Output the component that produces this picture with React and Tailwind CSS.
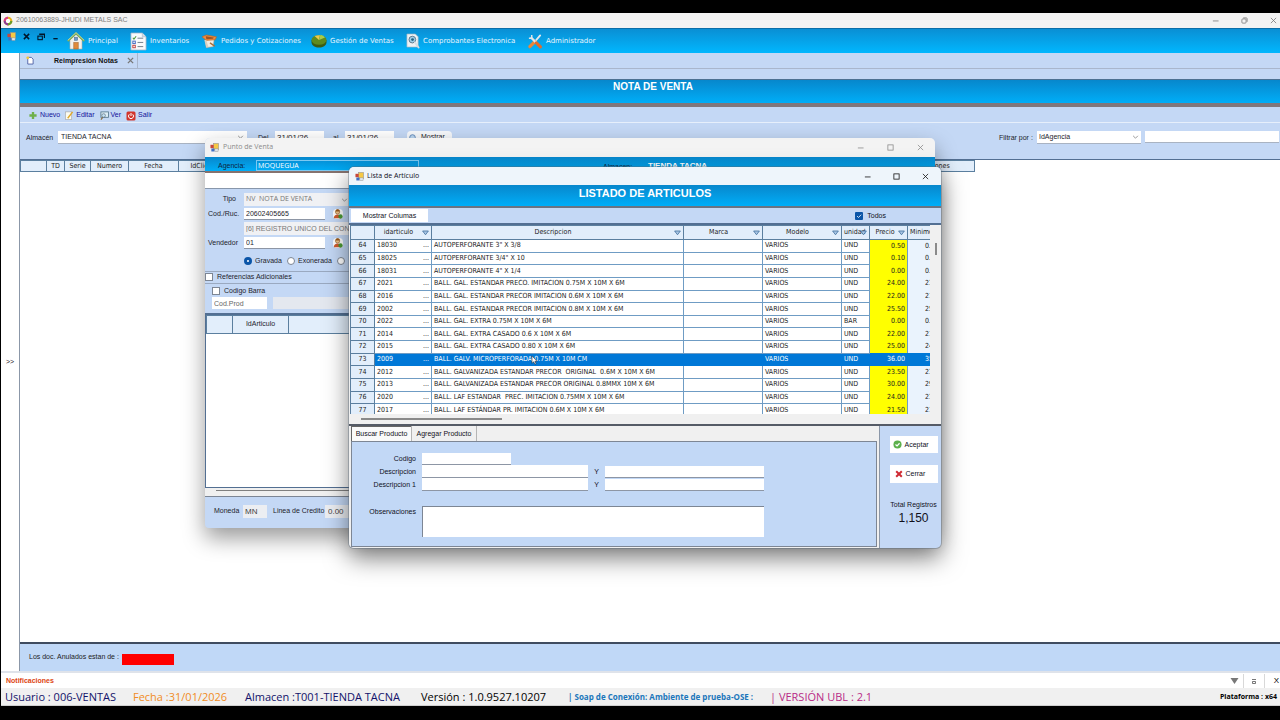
import React from "react";

const UI = "font-['Liberation_Sans',sans-serif]";
const SEGOE = "font-['Open_Sans',sans-serif]";
const BANNER = "bg-gradient-to-b from-[#0787cc] to-[#00aef8]";
const HEAD = "border border-[#5b7f9f] bg-[#e2eefb] p-0 font-normal";

const rows = [
  [64, "18030", 'AUTOPERFORANTE 3" X 3/8', "UND", "0.50", "0."],
  [65, "18025", 'AUTOPERFORANTE 3/4" X 10', "UND", "0.10", "0."],
  [66, "18031", 'AUTOPERFORANTE 4" X 1/4', "UND", "0.00", "0."],
  [67, "2021", "BALL. GAL. ESTANDAR PRECO. IMITACION 0.75M X 10M X 6M", "UND", "24.00", "23."],
  [68, "2016", "BALL. GAL. ESTANDAR PRECOR IMITACION 0.6M X 10M X 6M", "UND", "22.00", "21."],
  [69, "2002", "BALL. GAL. ESTANDAR PRECOR IMITACION 0.8M X 10M X 6M", "UND", "25.50", "25."],
  [70, "2022", "BALL. GAL. EXTRA 0.75M X 10M X 6M", "BAR", "0.00", "0."],
  [71, "2014", "BALL. GAL. EXTRA CASADO 0.6 X 10M X 6M", "UND", "22.00", "21."],
  [72, "2015", "BALL. GAL. EXTRA CASADO 0.80 X 10M X 6M", "UND", "25.00", "24."],
  [73, "2009", "BALL. GALV. MICROPERFORADA 0.75M X 10M CM", "UND", "36.00", "35."],
  [74, "2012", "BALL. GALVANIZADA ESTANDAR PRECOR  ORIGINAL  0.6M X 10M X 6M", "UND", "23.50", "23."],
  [75, "2013", "BALL. GALVANIZADA ESTANDAR PRECOR ORIGINAL 0.8MMX 10M X 6M", "UND", "30.00", "29."],
  [76, "2020", "BALL. LAF ESTANDAR  PREC. IMITACION 0.75MM X 10M X 6M", "UND", "24.00", "23."],
  [77, "2017", "BALL. LAF ESTÁNDAR PR. IMITACION 0.6M X 10M X 6M", "UND", "21.50", "21."],
];

function FormIcon() {
  return (
    <svg viewBox="0 0 10 10" className="h-[9px] w-[9px] shrink-0" aria-hidden="true">
      <rect x="4" y="0.500" width="5.500" height="7" fill="#f6c945" stroke="#8f8f8f" strokeWidth="0.600" />
      <rect x="0.500" y="2" width="3.600" height="3.800" fill="#c8483a" />
      <rect x="1.500" y="6.200" width="3.600" height="3.200" fill="#3f6fc4" />
      <rect x="5.400" y="6.500" width="3.600" height="2.900" fill="#dfe6ee" stroke="#8f8f8f" strokeWidth="0.500" />
    </svg>
  );
}

function HouseIcon() {
  return (
    <svg viewBox="0 0 18 18" className="h-[18px] w-[18px]" aria-hidden="true">
      <path d="M3 8v9h12V8L9 2.5z" fill="#f4f1ec" stroke="#b8ada0" strokeWidth="0.6" />
      <path d="M0.8 9.2 9 1.2l8.2 8" fill="none" stroke="#7cab49" strokeWidth="1.8" strokeLinejoin="round" />
      <path d="M0.8 8.4 9 0.6l8.2 7.8" fill="none" stroke="#dfe9cf" strokeWidth="0.7" />
      <rect x="6.8" y="10.5" width="4.4" height="6.5" fill="#e08a3a" stroke="#9c5a20" strokeWidth="0.5" />
      <rect x="7.3" y="5.2" width="3.4" height="3.2" fill="#6f9cc9" stroke="#4c6f96" strokeWidth="0.5" />
    </svg>
  );
}

function ChecklistIcon() {
  return (
    <svg viewBox="0 0 18 20" className="h-[19px] w-[17px]" aria-hidden="true">
      <path d="M1 1h12l4 4v14H1z" fill="#f8fafc" stroke="#9fb2c6" strokeWidth="0.8" />
      <path d="M13 1v4h4" fill="#d5dde6" stroke="#9fb2c6" strokeWidth="0.6" />
      <path d="m3 6 1.2 1.5L6.5 4.5" fill="none" stroke="#4f9a3c" strokeWidth="1.1" />
      <rect x="3" y="9.6" width="2.6" height="2.6" fill="none" stroke="#4166c0" strokeWidth="1" />
      <rect x="3" y="14" width="2.6" height="2.6" fill="none" stroke="#c04141" strokeWidth="1" />
      <path d="M8 6.5h6M8 11h6M8 15.4h6" stroke="#6c7a88" strokeWidth="1" />
    </svg>
  );
}

function BoxIcon() {
  return (
    <svg viewBox="0 0 17 16" className="h-[15px] w-[17px]" aria-hidden="true">
      <path d="M4 5.500 13.500 5l-1 8.500L5 14.500z" fill="#f1ede4" stroke="#a99f8e" strokeWidth="0.600" />
      <path d="M0.500 3 5 1l11 2-1.500 3.200L5 6.800z" fill="#ee8a3c" stroke="#b4621f" strokeWidth="0.600" />
      <path d="M4.500 2.500 13 3.600l-0.800 1.400-7 0.600z" fill="#9c5523" />
      <path d="m3 6.500 2 8 2.500-0.400L5 6.500z" fill="#d9d0c0" />
      <path d="M9 9.500l5 3.500" stroke="#a8703c" strokeWidth="1.500" />
    </svg>
  );
}

function PieIcon() {
  return (
    <svg viewBox="0 0 16 14" className="h-[14px] w-[16px]" aria-hidden="true">
      <path d="M0.5 6v2.5C1 12 4 13.5 8 13.5s7-1.5 7.500-5V6z" fill="#3c5c14" />
      <ellipse cx="8" cy="6" rx="7.5" ry="4.8" fill="#5f8a1e" />
      <path d="M8 6 3.500 2A8 5 0 0 1 9 1.200z" fill="#e9c94e" />
      <path d="M8 6 9.500 0.800A7.500 5 0 0 1 14 3.500z" fill="#a9cc4a" />
    </svg>
  );
}

function SearchDocIcon() {
  return (
    <svg viewBox="0 0 15 17" className="h-[16px] w-[14px]" aria-hidden="true">
      <path d="M1 1h9l3 3v11H1z" fill="#eef2f5" stroke="#a5b3bf" strokeWidth="0.7" />
      <circle cx="6.800" cy="7" r="3.600" fill="#9fd0ea" stroke="#5c7486" strokeWidth="1" />
      <circle cx="7" cy="7" r="1.500" fill="#23607f" />
      <path d="m9.500 10 4 5.500" stroke="#d9dee2" strokeWidth="2" strokeLinecap="round" />
    </svg>
  );
}

function ToolsIcon() {
  return (
    <svg viewBox="0 0 16 16" className="h-[15px] w-[16px]" aria-hidden="true">
      <path d="M13.500 1.500 8 8" stroke="#e4e8eb" strokeWidth="2" strokeLinecap="round" />
      <path d="m8 8-5.500 5.500" stroke="#e8873a" strokeWidth="3.400" strokeLinecap="round" />
      <path d="m3.500 3.500 6 6" stroke="#dfe4e8" strokeWidth="2.400" />
      <path d="M1.500 4.500 4.500 4.500 4.500 1" fill="none" stroke="#dfe4e8" strokeWidth="1.600" />
      <path d="m9.500 9.500 4.200 4.200" stroke="#e06c2c" strokeWidth="3.400" strokeLinecap="round" />
    </svg>
  );
}

function UserIcon() {
  return (
    <svg viewBox="0 0 12 12" className="h-[10px] w-[10px]" aria-hidden="true">
      <circle cx="5.500" cy="3.500" r="2.600" fill="#f0c48a" stroke="#8c5a1f" strokeWidth="0.700" />
      <path d="M3 3a2.600 2.600 0 0 1 5.200 0z" fill="#9a5a1c" />
      <path d="M1 11c0-3 2-4.500 4.500-4.500S10 8 10 11z" fill="#cf5a2c" />
      <circle cx="9" cy="9" r="2.600" fill="#4c9a35" />
    </svg>
  );
}

function Funnel() {
  return (
    <svg viewBox="0 0 8 6" className="h-[6px] w-[7px] shrink-0" aria-hidden="true">
      <path d="M0.700 0.700h6.600L4 5z" fill="#a9c6e4" stroke="#3f6e9c" strokeWidth="0.900" />
    </svg>
  );
}

function Chevron() {
  return (
    <svg viewBox="0 0 8 5" className="pointer-events-none h-[4px] w-[7px] shrink-0" aria-hidden="true">
      <path d="m1 1 3 3 3-3" fill="none" stroke="#777" strokeWidth="0.900" />
    </svg>
  );
}

function WindowButtons({ color, restore, gap }) {
  const hue = { stroke: "currentColor", fill: "none", strokeWidth: 0.9 };
  return (
    <div className={`flex items-center ${gap} ${color}`}>
      <button aria-label="Minimizar">
        <svg viewBox="0 0 8 8" className="h-[7px] w-[7px]"><path d="M1 4.500h6.500" {...hue} /></svg>
      </button>
      <button aria-label="Maximizar">
        <svg viewBox="0 0 8 8" className="h-[7px] w-[7px]">
          {restore ? (
            <>
              <rect x="1" y="2.200" width="4.800" height="4.800" rx="1" {...hue} />
              <path d="M2.500 1h3.500a1 1 0 0 1 1 1v3.500" {...hue} />
            </>
          ) : (
            <rect x="1" y="1" width="6" height="6" {...hue} />
          )}
        </svg>
      </button>
      <button aria-label="Cerrar ventana">
        <svg viewBox="0 0 8 8" className="h-[7px] w-[7px]"><path d="m1 1 6 6M7 1 1 7" {...hue} /></svg>
      </button>
    </div>
  );
}

function TitleBar() {
  return (
    <header className="flex h-[15px] items-center bg-[#f3f3f3] pl-[2px]">
      <svg viewBox="0 0 12 12" className="h-[10px] w-[10px]" aria-hidden="true">
        <circle cx="6" cy="6" r="4" fill="#fff" stroke="#e8b21c" strokeWidth="2.500" />
        <path d="M2 6a4 4 0 0 1 4-4" fill="none" stroke="#d83a8a" strokeWidth="2.500" />
        <path d="M10 6a4 4 0 0 1-4 4" fill="none" stroke="#6a9a2c" strokeWidth="2.500" />
        <path d="M6 10a4 4 0 0 1-4-4" fill="none" stroke="#8a3a9a" strokeWidth="2.500" />
      </svg>
      <h1 className={`${UI} ml-[3px] grow text-[7px] text-[#808080]`}>20610063889-JHUDI METALS SAC</h1>
      <div className="pr-[3px]">
        <WindowButtons color="text-[#777]" restore gap="gap-[22px]" />
      </div>
    </header>
  );
}

function MenuBar() {
  const items = [
    [<HouseIcon />, "Principal", "w-[63px]"],
    [<ChecklistIcon />, "Inventarios", "w-[71px]"],
    [<BoxIcon />, "Pedidos y Cotizaciones", "w-[110px]"],
    [<PieIcon />, "Gestión de Ventas", "w-[95px]"],
    [<SearchDocIcon />, "Comprobantes Electronica", "w-[121px]"],
    [<ToolsIcon />, "Administrador", "w-[80px]"],
  ];
  return (
    <nav className="flex h-[25px] items-center border-t border-[#0b6ea8] bg-gradient-to-b from-[#0a8fd4] to-[#00b7fe]">
      <div className="flex w-[66px] items-center gap-[7px] self-start pl-[6px] pt-[3px]">
        <FormIcon />
        <button aria-label="Cerrar documento">
          <svg viewBox="0 0 8 8" className="h-[7px] w-[7px]"><path d="m1 1 6 6M7 1 1 7" stroke="#00152a" strokeWidth="1.700" /></svg>
        </button>
        <button aria-label="Restaurar documento">
          <svg viewBox="0 0 9 9" className="h-[8px] w-[8px]">
            <path d="M2.500 1.500h6v4" fill="none" stroke="#00152a" strokeWidth="1.600" />
            <rect x="1" y="3.500" width="5" height="4" fill="none" stroke="#00152a" strokeWidth="1.200" />
          </svg>
        </button>
        <button aria-label="Minimizar documento">
          <svg viewBox="0 0 8 8" className="h-[7px] w-[7px]"><path d="M1.500 6.500h5" stroke="#00152a" strokeWidth="1.500" /></svg>
        </button>
      </div>
      {items.map(([icon, label, w]) => (
        <button key={label} className={`${w} flex shrink-0 items-center gap-[3px] whitespace-nowrap text-[7px] text-[#e6f6ff] font-['DejaVu_Sans',sans-serif]`}>
          {icon}
          {label}
        </button>
      ))}
    </nav>
  );
}

function ToolButton({ icon, label }) {
  return (
    <button className="flex items-center gap-[2px] text-[7px] text-[#12129a]">
      {icon}
      {label}
    </button>
  );
}

function DocumentTools() {
  return (
    <div className={`${UI} flex h-[16px] items-center gap-[5px] border-b border-[#e6effb] pl-[8px] pt-[2px]`}>
      <ToolButton
        label="Nuevo"
        icon={<svg viewBox="0 0 10 10" className="h-[9px] w-[10px]"><path d="M5 1v8M1 5h8" stroke="#6fb04a" strokeWidth="2.600" /></svg>}
      />
      <ToolButton
        label="Editar"
        icon={
          <svg viewBox="0 0 10 10" className="h-[9px] w-[9px]">
            <rect x="0.500" y="1" width="7" height="8.500" fill="#fbfbf0" stroke="#9a9a9a" strokeWidth="0.600" />
            <path d="m3 8 5.500-7" stroke="#e0a92c" strokeWidth="1.600" />
          </svg>
        }
      />
      <ToolButton
        label="Ver"
        icon={
          <svg viewBox="0 0 10 10" className="h-[9px] w-[9px]">
            <rect x="1" y="1" width="8.500" height="6" fill="#dcecf5" stroke="#4f7288" strokeWidth="0.900" />
            <circle cx="4" cy="5" r="2" fill="#c6e4f4" stroke="#567" strokeWidth="0.700" />
            <path d="m3 7-2 2.500" stroke="#8a6a3a" strokeWidth="1.200" />
          </svg>
        }
      />
      <ToolButton
        label="Salir"
        icon={
          <svg viewBox="0 0 10 10" className="h-[10px] w-[10px]">
            <rect x="0.500" y="0.500" width="9" height="9" rx="1.500" fill="#d2352c" />
            <path d="M3.300 3.300a2.500 2.500 0 1 0 3.400 0M5 2v3" fill="none" stroke="#fff" strokeWidth="1" />
          </svg>
        }
      />
    </div>
  );
}

function Filters() {
  return (
    <div className={`${UI} flex h-[36px] items-start bg-[#c4d8f5] pl-[6px] pt-[8px] text-[7px] text-[#1d1d2b]`}>
      <label htmlFor="almacen" className="w-[32px] pt-[2px]">Almacén</label>
      <div className="flex h-[13px] w-[189px] items-center border-b border-[#a9b3c2] bg-white pr-[3px]">
        <select id="almacen" className="h-full grow appearance-none pl-[3px] pt-px text-[7px]"><option>TIENDA TACNA</option></select>
        <Chevron />
      </div>
      <label htmlFor="del" className="w-[28px] pl-[11px] pt-[2px]">Del</label>
      <input id="del" defaultValue="31/01/26" className="h-[13px] w-[49px] bg-white pl-[2px] text-[8px]" />
      <label htmlFor="al" className="w-[21px] pl-[9px] pt-[2px]">al</label>
      <input id="al" defaultValue="31/01/26" className="h-[13px] w-[49px] bg-white pl-[2px] text-[8px]" />
      <button className="ml-[13px] flex h-[13px] w-[45px] items-center gap-[5px] rounded-sm bg-[#f6f8fb] pl-[2px]">
        <svg viewBox="0 0 8 8" className="h-[7px] w-[7px]"><circle cx="4" cy="4" r="3.200" fill="#bcd7f2" stroke="#5b84b5" /></svg>
        Mostrar
      </button>
      <div className="ml-auto flex items-start">
        <label htmlFor="filtro" className="w-[38px] whitespace-nowrap pt-[2px]">Filtrar por :</label>
        <div className="flex h-[13px] w-[104px] items-center border-b border-[#a9b3c2] bg-white pr-[2px]">
          <select id="filtro" className="h-full grow appearance-none pl-[2px] text-[7px]"><option>IdAgencia</option></select>
          <Chevron />
        </div>
        <input aria-label="Texto del filtro" className="ml-[4px] mr-px h-[12px] w-[134px] border-b border-[#a9b3c2] bg-white" />
      </div>
    </div>
  );
}

function NotesTable() {
  const cols = [
    ["", "w-[26px]"], ["TD", "w-[18px]"], ["Serie", "w-[26px]"], ["Numero", "w-[38px]"],
    ["Fecha", "w-[50px]"], ["IdCliente", "w-[52px]"], ["", "w-[690px]"], ["iones", "w-[54px]"],
  ];
  return (
    <div className="grow border-t border-[#536f92] bg-white">
      <table className="w-[954px] table-fixed border-collapse text-[7px] leading-[10px] text-[#222] font-['DejaVu_Sans_Condensed','DejaVu_Sans',sans-serif]">
        <thead>
          <tr className="h-[11px]">
            {cols.map(([label, w], i) => (
              <th key={i} className={`${HEAD} ${w} ${i === 7 ? "pl-[12px] text-left" : "text-center"}`}>{label}</th>
            ))}
          </tr>
        </thead>
      </table>
    </div>
  );
}

function SaleWindow() {
  const field = "h-[12px] border-b border-[#8d96a5] bg-white pl-[2px] text-[7px]";
  return (
    <section aria-label="Punto de Venta" className={`${UI} absolute left-[205px] top-[138px] flex h-[390px] w-[730px] flex-col overflow-hidden rounded-t-[5px] rounded-b-[4px] bg-[#c4d8f5] text-[7px] text-[#1d1d2b] shadow-[0_10px_22px_rgba(0,0,0,0.4)]`}>
      <div className={`${SEGOE} flex h-[19px] shrink-0 items-center bg-[#f3f3f3] pl-[5px] pr-[11px]`}>
        <FormIcon />
        <h2 className="ml-[4px] grow text-[7px] text-[#8b8b8b]">Punto de Venta</h2>
        <WindowButtons color="text-[#8a8a8a]" gap="gap-[23px]" />
      </div>
      <div className={`${BANNER} flex h-[14px] shrink-0 items-center pl-[13px]`}>
        <label htmlFor="agencia" className="w-[38px] pt-[4px] text-[#0d2440]">Agencia:</label>
        <input id="agencia" defaultValue="MOQUEGUA" className={`${SEGOE} mt-[3px] h-[11px] w-[163px] border border-[#7cc9f2] bg-transparent pl-px text-[7px] text-white`} />
        <span className="ml-[184px] mt-[6px] w-[45px] whitespace-nowrap text-[#0d2440]">Almacen:</span>
        <span className="mt-[4px] whitespace-nowrap text-[8px] font-bold text-white">TIENDA TACNA</span>
      </div>
      <div className="h-[18px] shrink-0 border-b border-t-2 border-b-[#8897ab] border-t-[#86726e] bg-white" />
      <div className="flex flex-col pl-[39px] pt-[4px]">
        <div className="grid grid-cols-[106px_1fr] items-center gap-y-[2px]">
          <div className="-ml-[39px] flex items-center">
            <label htmlFor="tipo" className="w-[39px] pr-[8px] text-right">Tipo</label>
            <div className="flex h-[13px] grow items-center bg-[#f0f1f4] pr-[2px]">
              <select id="tipo" className={`${SEGOE} h-full grow appearance-none whitespace-pre pl-[2px] text-[7px] text-[#777]`}><option>{"NV\u00a0 NOTA DE VENTA"}</option></select>
              <Chevron />
            </div>
          </div>
          <span />
          <div className="-ml-[39px] flex w-[145px] items-center">
            <label htmlFor="ruc" className="w-[39px] pl-[3px]">Cod./Ruc.</label>
            <input id="ruc" defaultValue="20602405665" className={`${field} w-[81px]`} />
            <button aria-label="Buscar cliente" className="ml-[8px] rounded-sm bg-white"><UserIcon /></button>
          </div>
          <span />
          <input aria-label="Documento" defaultValue="[6] REGISTRO UNICO DEL CONTRIBUYENTE" className="h-[13px] bg-[#f0f1f4] pl-[2px] text-[7px] text-[#777]" />
          <span />
          <div className="-ml-[39px] flex w-[145px] items-center">
            <label htmlFor="vendedor" className="w-[39px] pl-[3px]">Vendedor</label>
            <input id="vendedor" defaultValue="01" className={`${field} w-[81px]`} />
            <button aria-label="Buscar vendedor" className="ml-[8px] rounded-sm bg-white"><UserIcon /></button>
          </div>
        </div>
        <div className="mt-[7px] flex items-center">
          {["Gravada", "Exonerada", ""].map((t, i) => (
            <label key={i} className={`flex items-center gap-[3px] ${i === 0 ? "w-[43px]" : "w-[50px]"}`}>
              <input type="radio" name="igv" aria-label={t || "Otro"} defaultChecked={i === 0} className="h-[8px] w-[8px] appearance-none rounded-full border border-[#7d8694] bg-white checked:border-[3px] checked:border-[#0a55a8]" />
              {t}
            </label>
          ))}
        </div>
      </div>
      <label className="mt-[4px] flex h-[13px] shrink-0 items-center gap-[4px] border-y border-[#9aa9c0]">
        <input type="checkbox" className="h-[8px] w-[8px] appearance-none border border-[#7d8694] bg-white" />
        Referencias Adicionales
      </label>
      <div className="flex h-[29px] shrink-0 flex-col gap-px pl-[7px] pt-[2px]">
        <label className="flex items-center gap-[4px]">
          <input type="checkbox" className="h-[8px] w-[8px] appearance-none border border-[#7d8694] bg-white" />
          Codigo Barra
        </label>
        <div className="flex gap-[6px]">
          <input aria-label="Codigo del producto" placeholder="Cod.Prod" className="h-[12px] w-[55px] bg-white pl-[2px] text-[7px] placeholder:text-[#666]" />
          <input aria-label="Producto" className="h-[12px] w-[200px] bg-[#e4e8ef]" />
        </div>
      </div>
      <div className="grow border border-t-2 border-[#536f92] bg-white">
        <table className="w-[237px] table-fixed border-collapse text-[7px]">
          <thead>
            <tr className="h-[18px]">
              <th className={`${HEAD} w-[26px]`} />
              <th className={`${HEAD} w-[56px]`}>IdArticulo</th>
              <th className={`${HEAD} w-[155px] text-center`}>D</th>
            </tr>
          </thead>
        </table>
      </div>
      <div className="flex h-[9px] shrink-0 items-start border-b border-[#7d8694] bg-[#f0f0f0] px-[11px] pt-[2px]">
        <div className="h-px w-[300px] bg-[#808080]" />
      </div>
      <div className="flex h-[31px] shrink-0 items-center pb-[3px] pl-[9px]">
        <label htmlFor="moneda" className="w-[29px]">Moneda</label>
        <input id="moneda" defaultValue="MN" className="h-[13px] w-[24px] bg-[#eceef2] pl-[2px] text-[8px] text-[#444]" />
        <label htmlFor="credito" className="w-[58px] whitespace-nowrap pl-[6px]">Linea de Credito</label>
        <input id="credito" defaultValue="0.00" className="h-[13px] w-[50px] bg-[#eceef2] pl-[3px] text-[8px] text-[#444]" />
      </div>
    </section>
  );
}

function ArticlesTable() {
  const heads = [
    ["", "w-[24px]", false], ["idarticulo", "w-[57px]", true], ["Descripcion", "w-[252px]", true], ["Marca", "w-[79px]", true],
    ["Modelo", "w-[79px]", true], ["unidad", "w-[28px]", true], ["Precio", "w-[38px]", true], ["Minimo", "w-[36px]", false],
  ];
  return (
    <div className="flex h-[191px] shrink-0 border-t-2 border-[#536f92] bg-[#f0f0f0] pl-px">
      <div className="w-[580px] overflow-hidden">
        <table className="h-[192px] w-[593px] table-fixed border-collapse whitespace-nowrap bg-white text-[7px] leading-[9px] text-[#1c1c1c] font-['DejaVu_Sans_Condensed','Open_Sans',sans-serif]">
          <thead>
            <tr className="h-[14px]">
              {heads.map(([label, w, filter], i) => (
                <th key={i} className={`${HEAD} ${w} overflow-hidden`}>
                  <div className="flex items-center pr-[2px]">
                    <span className={`grow ${i === 5 || i === 7 ? "text-left" : "text-center"} ${i > 4 ? "w-0 pl-[2px]" : ""}`}>{label}</span>
                    {filter && <Funnel />}
                  </div>
                </th>
              ))}
            </tr>
          </thead>
          <tbody>
            {rows.map(([n, id, desc, unit, price, min]) => {
              const sel = n === 73;
              const line = sel ? "border-[#0078d7]" : "border-[#6f9cc4]";
              const cell = `border ${line} px-[2px] py-0`;
              const plain = `border-x ${line} px-[2px] py-0`;
              return (
                <tr key={n} className={sel ? "bg-[#0078d7] text-white" : ""}>
                  <th scope="row" className="border border-[#5b7f9f] bg-[#e2eefb] p-0 text-center font-normal text-[#1c1c1c]">{n}</th>
                  <td className={cell}>
                    <div className="flex justify-between"><span>{id}</span><span>...</span></div>
                  </td>
                  <td className={`${cell} whitespace-pre`}>{desc}</td>
                  <td className={cell} />
                  <td className={cell}>VARIOS</td>
                  <td className={cell}>{unit}</td>
                  <td className={`${plain} text-right ${sel ? "" : "bg-[#ffff00]"}`}>{price}</td>
                  <td className={`${plain} pl-[17px] ${sel ? "" : "bg-[#eaf3fd]"}`}>{min}</td>
                </tr>
              );
            })}
          </tbody>
        </table>
      </div>
      <div className="flex grow justify-center pt-[18px]">
        <div className="h-[12px] w-[2px] bg-[#8a8a8a]" />
      </div>
    </div>
  );
}

function SearchForm() {
  const label = "text-right pr-[6px]";
  const input = "border-b border-[#8d96a5] bg-white px-[2px] text-[7px]";
  return (
    <div className="flex grow flex-col border border-[#7d8694] bg-[#c2d8f6] pt-[10px]">
      <div className="grid grid-cols-[70px_166px_17px_159px] items-center">
        <label htmlFor="codigo" className={label}>Codigo</label>
        <input id="codigo" className={`${input} h-[12px] w-[89px]`} />
        <span className="col-span-2 h-[13px]" />
        <label htmlFor="desc-a" className={label}>Descripcion</label>
        <input id="desc-a" className={`${input} h-[13px]`} />
        <label htmlFor="desc-b" className="text-center">Y</label>
        <input id="desc-b" className={`${input} mt-px h-[12px]`} />
        <label htmlFor="desc-c" className={label}>Descripcion 1</label>
        <input id="desc-c" className={`${input} h-[13px]`} />
        <label htmlFor="desc-d" className="text-center">Y</label>
        <input id="desc-d" className={`${input} mt-px h-[12px]`} />
      </div>
      <div className="mt-[15px] flex">
        <label htmlFor="obs" className={`${label} w-[70px] pt-px`}>Observaciones</label>
        <textarea id="obs" className="h-[31px] w-[342px] resize-none border-l border-t border-[#7d8694] bg-white text-[7px]" />
      </div>
    </div>
  );
}

function ArticlesWindow() {
  return (
    <section aria-label="Lista de Artículo" className={`${UI} absolute left-[349px] top-[167px] flex h-[381px] w-[592px] flex-col overflow-hidden rounded-[5px] bg-[#c4d8f5] text-[7px] leading-[10px] text-[#10101c] shadow-[0_0_0_1px_rgba(90,105,120,0.4),0_10px_24px_rgba(0,0,0,0.5)]`}>
      <div className="flex h-[18px] shrink-0 items-center bg-[#eef5fb] pl-[6px] pr-[12px]">
        <FormIcon />
        <h2 className={`${SEGOE} ml-[3px] grow text-[7px]`}>Lista de Artículo</h2>
        <WindowButtons color="text-[#111]" gap="gap-[22px]" />
      </div>
      <div className={`${BANNER} h-[23px] shrink-0 border-b-2 border-[#6b7482] pt-[3px] text-center text-[11px] font-bold text-white`}>
        LISTADO DE ARTICULOS
      </div>
      <div className="flex h-[15px] shrink-0 items-center pl-[2px]">
        <button className="h-[13px] w-[77px] bg-white">Mostrar Columas</button>
        <label className="ml-auto mr-[55px] flex items-center gap-[4px]">
          <input type="checkbox" defaultChecked className="peer sr-only" />
          <svg viewBox="0 0 8 8" className="h-[8px] w-[8px]" aria-hidden="true">
            <rect width="8" height="8" rx="1" fill="#0a55a8" />
            <path d="m2 4 1.500 1.500L6.200 2.700" fill="none" stroke="#fff" strokeWidth="0.800" />
          </svg>
          Todos
        </label>
      </div>
      <ArticlesTable />
      <div className="flex h-[12px] shrink-0 items-center border-b-2 border-[#555b66] bg-[#f0f0f0] pl-[12px]">
        <div className="h-[2px] w-[141px] bg-[#8a8a8a]" />
      </div>
      <div className="flex grow">
        <div className="flex w-[531px] flex-col border-r border-[#8b97a8] bg-[#f0f0f0] px-[2px] pb-px">
          <div role="tablist" className="flex h-[15px]">
            <button role="tab" aria-selected="true" className="w-[60px] border-l border-t border-[#666] bg-[#fafafa] text-center">Buscar Producto</button>
            <button role="tab" aria-selected="false" className="w-[66px] border-x border-[#b5b5b5] text-center">Agregar Producto</button>
          </div>
          <SearchForm />
        </div>
        <div className="flex grow flex-col items-center pl-[6px] pt-[10px]">
          <button className="flex h-[17px] w-[48px] items-center gap-[3px] bg-white pl-[3px]">
            <svg viewBox="0 0 10 10" className="h-[9px] w-[9px]"><circle cx="5" cy="5" r="4.500" fill="#5cb04c" /><path d="m2.800 5 1.700 1.600 2.800-3" fill="none" stroke="#fff" strokeWidth="1.300" /></svg>
            Aceptar
          </button>
          <button className="mt-[12px] flex h-[18px] w-[48px] items-center gap-[3px] bg-white pl-[5px]">
            <svg viewBox="0 0 10 10" className="h-[8px] w-[8px]"><path d="m1.500 1.500 7 7M8.500 1.500l-7 7" stroke="#cf2a33" strokeWidth="2.500" /></svg>
            Cerrar
          </button>
          <p className="mt-[17px] whitespace-nowrap">Total Registros</p>
          <output className="mt-[3px] text-[12px]">1,150</output>
        </div>
      </div>
    </section>
  );
}

function StatusBar() {
  return (
    <footer>
      <div className={`${UI} flex h-[17px] items-center border-t-2 border-[#dfe3ea] bg-white pl-[5px] pt-px text-[7px]`}>
        <span className="grow font-bold text-[#dd4410]">Notificaciones</span>
        <button aria-label="Desplegar" className="px-[4px]">
          <svg viewBox="0 0 8 6" className="h-[6px] w-[9px]"><path d="M0 0h8L4 6z" fill="#777" /></svg>
        </button>
        <button aria-label="Anclar" className="h-full w-[22px] border-x border-[#d8d8d8]">
          <svg viewBox="0 0 4 5" className="mx-auto h-[5px] w-[4px]"><path d="M0 .5h4M.5 2.500h3v2h-3z" fill="none" stroke="#555" strokeWidth="0.800" /></svg>
        </button>
        <button className="w-[15px] pl-[8px] text-[8px]">X</button>
      </div>
      <div className="flex h-[18px] items-center whitespace-nowrap border-b border-[#cfcfcf] bg-[#f0f0f0] pl-[4px] pt-px text-[11px] font-['Open_Sans',sans-serif]">
        <span className="w-[128px] text-[#12126a]">Usuario : 006-VENTAS</span>
        <span className="w-[112px] text-[#f08c24]">Fecha :31/01/2026</span>
        <span className="w-[176px] font-medium text-[#12126a]">Almacen :T001-TIENDA TACNA</span>
        <span className="w-[147px] font-medium text-black">Versión : 1.0.9527.10207</span>
        <span className="w-[202px] text-[8px] font-bold text-[#1b76bb]">| Soap de Conexión: Ambiente de prueba-OSE :</span>
        <span className="grow text-[#b82a86]">| VERSIÓN UBL : 2.1</span>
        <span className="pr-[3px] text-[7px] font-bold text-black">Plataforma : x64</span>
      </div>
    </footer>
  );
}

export default function App() {
  return (
    <div className="relative flex min-h-screen flex-col overflow-hidden bg-black pb-[14px] pl-px pt-[13px]">
      <TitleBar />
      <MenuBar />
      <div className="flex grow">
        <aside className="flex w-[18px] shrink-0 flex-col justify-center bg-white">
          <button aria-label="Expandir panel" className={`${UI} text-[7px] text-[#222]`}>&gt;&gt;</button>
        </aside>
        <main className={`${UI} flex grow flex-col border-l border-[#8b97a8] bg-[#c4d8f5]`}>
          <div role="tablist" className="flex h-[16px] border-b border-[#a9b6cc]">
            <button role="tab" aria-selected="true" className="flex w-[118px] items-center border-r border-[#a9b6cc] pl-[6px] text-[7px] font-bold text-[#111]">
              <svg viewBox="0 0 9 10" className="h-[9px] w-[8px]" aria-hidden="true">
                <path d="M2 1.500h4l2 2V9H2z" fill="#fff" stroke="#3b4e9a" strokeWidth="0.900" />
                <circle cx="2" cy="2" r="1.600" fill="#f0c63a" />
              </svg>
              <span className="ml-[20px] w-[73px] pt-px text-left">Reimpresión Notas</span>
              <svg viewBox="0 0 8 8" className="h-[7px] w-[7px]" aria-hidden="true"><path d="m1 1 6 6M7 1 1 7" stroke="#777" strokeWidth="1.500" /></svg>
            </button>
          </div>
          <div className="h-[10px]" />
          <h2 className={`${BANNER} h-[28px] border-b-4 border-t border-b-[#80777c] border-t-[#4d7192] pl-[6px] text-center text-[10px] font-bold leading-[14px] text-white`}>NOTA DE VENTA</h2>
          <DocumentTools />
          <Filters />
          <NotesTable />
          <div className="flex h-[29px] items-center border-t-2 border-[#3f4c60] bg-[#c0d8f7] pl-[9px] text-[7px] text-[#222]">
            <span className="w-[93px]">Los doc. Anulados estan de :</span>
            <span className="mt-[3px] h-[11px] w-[52px] bg-[#ff0000]" />
          </div>
        </main>
      </div>
      <StatusBar />
      <SaleWindow />
      <ArticlesWindow />
      <svg viewBox="0 0 8 12" className="absolute left-[531px] top-[355px] h-[10px] w-[7px]" aria-hidden="true">
        <path d="M1 1v9l2-2 1.500 3.200 1.400-.7L4.500 7.500H7z" fill="#fff" stroke="#333" strokeWidth="0.700" />
      </svg>
    </div>
  );
}
